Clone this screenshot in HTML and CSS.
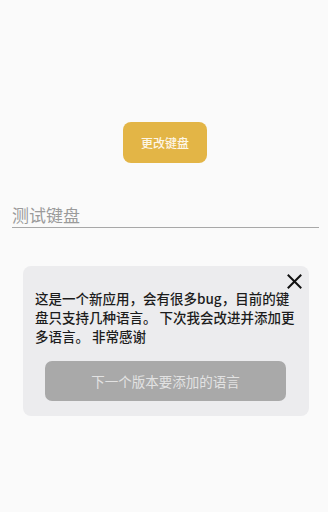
FILE: index.html
```html
<!DOCTYPE html>
<html lang="zh-CN">
<head>
<meta charset="utf-8">
<link rel="stylesheet" href="styles.css">
</head>
<body>
<div class="page">
  <div class="top">
    <button class="change-btn">更改键盘</button>
  </div>
  <div class="field">
    <div class="field-text">测试键盘</div>
  </div>
  <div class="card">
    <div class="card-head">
      <svg class="close" width="15" height="15" viewBox="0 0 15 15"><path d="M1.5 1.5 L13.5 13.5 M13.5 1.5 L1.5 13.5" stroke="#111" stroke-width="2" stroke-linecap="square" fill="none"/></svg>
    </div>
    <p class="msg">这是一个新应用，会有很多bug，目前的键盘只支持几种语言。 下次我会改进并添加更多语言。 非常感谢</p>
    <button class="next-btn">下一个版本要添加的语言</button>
  </div>
</div>
</body>
</html>
```
FILE: styles.css
```css
html, body {
  margin: 0;
  padding: 0;
  background: #fafafa;
}
body {
  font-family: "Noto Sans CJK SC", "Noto Sans", sans-serif;
  width: 328px;
  height: 512px;
  overflow: hidden;
}
.page {
  display: flex;
  flex-direction: column;
}
.top {
  display: flex;
  justify-content: center;
  padding-top: 122px;
  padding-left: 2px;
}
.change-btn {
  width: 84px;
  height: 41px;
  border: none;
  border-radius: 8px;
  background: #e3b546;
  color: #fdf6e6;
  font-family: inherit;
  font-size: 12px;
  font-weight: 500;
  padding: 0;
}
.field {
  margin: 40px 9px 0 12px;
  border-bottom: 1.5px solid #a8a8a8;
  height: 24px;
  display: flex;
  align-items: flex-end;
}
.field-text {
  font-size: 17px;
  line-height: 22px;
  color: #9b9b9b;
  padding-bottom: 1px;
}
.card {
  margin: 38px 19px 0 23px;
  background: #ececee;
  border-radius: 8px;
  padding: 8px 7px 15px 12px;
  display: flex;
  flex-direction: column;
}
.card-head {
  display: flex;
  justify-content: flex-end;
  height: 15px;
}
.close {
  display: block;
}
.msg {
  margin: 0;
  width: 264px;
  font-size: 13.5px;
  line-height: 19px;
  font-weight: 500;
  color: #1c1c1c;
}
.next-btn {
  margin: 15px 0 0 10px;
  width: 241px;
  height: 40px;
  border: none;
  border-radius: 7px;
  background: #a9a9a9;
  color: #e2e2e2;
  font-family: inherit;
  font-size: 13.5px;
  padding: 0;
}
```
